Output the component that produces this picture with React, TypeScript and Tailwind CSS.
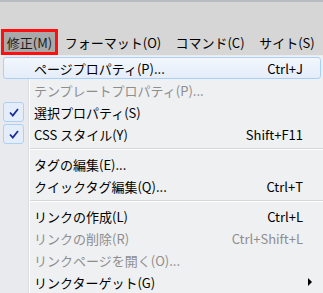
import React from "react";

type Item =
  | { kind: "sep" }
  | {
      kind?: "item";
      label: string;
      shortcut?: string;
      disabled?: boolean;
      checked?: boolean;
      active?: boolean;
      submenu?: boolean;
    };

const items: Item[] = [
  { label: "ページプロパティ(P)...", shortcut: "Ctrl+J", active: true },
  { label: "テンプレートプロパティ(P)...", disabled: true },
  { label: "選択プロパティ(S)", checked: true },
  { label: "CSS スタイル(Y)", shortcut: "Shift+F11", checked: true },
  { kind: "sep" },
  { label: "タグの編集(E)..." },
  { label: "クイックタグ編集(Q)...", shortcut: "Ctrl+T" },
  { kind: "sep" },
  { label: "リンクの作成(L)", shortcut: "Ctrl+L" },
  { label: "リンクの削除(R)", shortcut: "Ctrl+Shift+L", disabled: true },
  { label: "リンクページを開く(O)...", disabled: true },
  { label: "リンクターゲット(G)", submenu: true },
];

const menus = [
  { label: "修正(M)", w: "w-[57px]", open: true },
  { label: "フォーマット(O)", w: "w-[110px]" },
  { label: "コマンド(C)", w: "w-[84px]" },
  { label: "サイト(S)", w: "w-[70px]" },
];

// the icon gutter on the left of every row
function Gutter({ children }: { children?: React.ReactNode }) {
  return (
    <div className="flex w-[30px] shrink-0 self-stretch">
      <div className="flex flex-1 items-stretch bg-[#e8eaee] py-px pl-[3px] pr-[4px]">{children}</div>
      <div className="w-px bg-[#dcdde0]" />
      <div className="w-px bg-white" />
    </div>
  );
}

function Check() {
  return (
    <div className="flex flex-1 items-center justify-center rounded-[3px] border border-[#afd0f5] bg-[#e4edfa]">
      <svg width="10" height="9" viewBox="0 0 10 9">
        <path d="M1 4.5 L3.8 7.5 L9 1" fill="none" stroke="#1b2c9c" strokeWidth="1.8" />
      </svg>
    </div>
  );
}

export default function App() {
  return (
    <div
      className="flex h-[293px] w-[323px] flex-col overflow-hidden bg-[#d6d6d6] text-[13px] text-black"
      style={{ fontFamily: '"Noto Sans CJK JP", "Noto Sans", sans-serif' }}
    >
      <div className="h-[29px] shrink-0 border-t-2 border-[#b8bcc3]" />

      <div className="flex h-[26px] shrink-0 items-stretch pl-[1px]">
        {menus.map((m) => (
          <div
            key={m.label}
            className={
              m.open
                ? `${m.w} flex shrink-0 items-center justify-center border-[3px] border-[#ff1010] bg-[#a9a9a9] leading-none text-[#1a1a1a]`
                : `${m.w} flex shrink-0 items-center justify-center leading-none`
            }
          >
            {m.label}
          </div>
        ))}
      </div>

      <div className="flex flex-1 flex-col border-t border-[#ebebeb] bg-[#eef0f2]">
        <div className="flex h-[1px] shrink-0">
          <Gutter />
        </div>
        {items.map((it, i) => {
          if (it.kind === "sep") {
            return (
              <div key={i} className="flex h-[8px] shrink-0">
                <Gutter />
                <div className="flex flex-1 flex-col justify-center">
                  <div className="h-px bg-[#d6d7da]" />
                  <div className="h-px bg-white" />
                </div>
              </div>
            );
          }
          return (
            <div key={i} className="relative flex h-[22px] shrink-0">
              {it.active && (
                <div className="absolute inset-y-0 left-[3px] right-[2px] rounded-[3px] border border-[#a9d0f6] bg-gradient-to-b from-[#f3f7fd] to-[#e4edf9]" />
              )}
              <Gutter>{it.checked && <Check />}</Gutter>
              <div
                className={`relative flex flex-1 items-center pl-[4px] leading-none ${
                  it.disabled ? "text-[#8e8e8e]" : "text-black"
                }`}
              >
                <span className="flex-1 whitespace-nowrap">{it.label}</span>
                {it.shortcut && <span className="whitespace-nowrap">{it.shortcut}</span>}
                <div className="flex w-[20px] shrink-0 justify-end pr-[11px]">
                  {it.submenu && (
                    <svg width="4" height="8" viewBox="0 0 4 8">
                      <path d="M0 0 L4 4 L0 8 Z" fill="#000" />
                    </svg>
                  )}
                </div>
              </div>
            </div>
          );
        })}
        <div className="flex flex-1">
          <Gutter />
        </div>
      </div>
    </div>
  );
}
